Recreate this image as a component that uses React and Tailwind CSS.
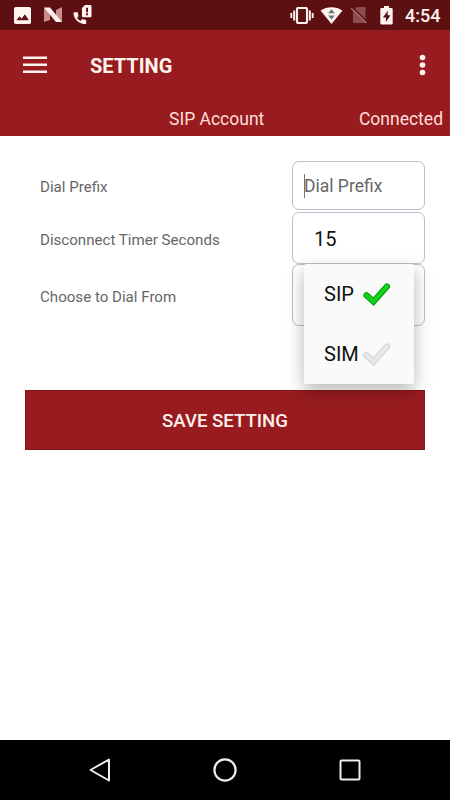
function StatusBar() {
  return (
    <div className="flex h-[30px] items-center bg-[#5c1012] pl-[14px] pr-[10px] text-[#fff3f0]">
      <svg className="h-[17px] w-[17px] shrink-0" viewBox="0 0 17 17">
        <rect width="17" height="17" rx="1.8" fill="currentColor" />
        <path d="M2.5 13.3 5.5 9.2l2 2.5 3.4-4.5 4 6.1z" fill="#5c1012" />
      </svg>
      <svg className="ml-3 h-4 w-5 shrink-0" viewBox="0 0 20 16">
        <path d="M1 1 7 3v10l-6 2zM19 0v15l-6-2V3z" fill="#c98f8f" />
        <path d="M1 0.5h6L19 15h-6z" fill="currentColor" />
      </svg>
      <svg className="ml-[10px] h-5 w-5 shrink-0" viewBox="0 0 20 20">
        <path d="M1.1 7.3h3.3c.4 0 .6.3.6.6 0 1.2.2 2.2.6 3.2l-1.6 2c1.2 1.4 2.1 2.1 3.5 2.8l1.7-1.9c1 .4 2.2.7 3.3.7.4 0 .7.3.7.7v3c0 .5-.3.7-.7.7C6.5 19.1.5 14.2.5 7.9c0-.4.3-.6.6-.6z" fill="currentColor" />
        <path d="M12 0h5.5a1 1 0 0 1 1 1v10.3a1 1 0 0 1-1 1h-7.5a1 1 0 0 1-1-1V3z" fill="currentColor" />
        <path d="M13.1 2.8h1.9v4.4h-1.9zM13.1 8.3h1.9v1.9h-1.9z" fill="#5c1012" />
      </svg>
      <svg className="ml-auto h-[17px] w-6 shrink-0" viewBox="0 0 24 17" fill="none" stroke="currentColor">
        <rect x="7" y="1" width="10" height="15" rx="1" strokeWidth="2.1" />
        <path d="M4.2 3.5v10M19.8 3.5v10" strokeWidth="2" />
        <path d="M1.3 6v5M22.7 6v5" strokeWidth="1.9" />
      </svg>
      <svg className="ml-[6px] h-[17px] w-6 shrink-0" viewBox="0 0 24 17">
        <path d="M0.5 3.5C7-1 16-1 22.5 3.5L11.5 17z" fill="currentColor" />
        <path d="M11.5 2.3 14.8 6.3H8.2zM8.2 8.5h6.6l-3.3 4z" fill="#5e7878" />
      </svg>
      <svg className="ml-[6px] h-[18px] w-[18px] shrink-0" viewBox="0 0 18 18">
        <path d="M7 1h7.5a1 1 0 0 1 1 1v14a1 1 0 0 1-1 1H4a1 1 0 0 1-1-1V5z" fill="#8c4c4f" />
        <path d="M2.5 1.5 17.5 16" stroke="#5c1012" strokeWidth="1.3" />
        <path d="M1 2 16.5 17" stroke="#a26c6e" strokeWidth="1.2" />
      </svg>
      <svg className="ml-3 h-[19px] w-[13px] shrink-0" viewBox="0 0 13 19">
        <path d="M4 0h5v2h2.5a1.2 1.2 0 0 1 1.2 1.2v14a1.2 1.2 0 0 1-1.2 1.2h-10A1.2 1.2 0 0 1 .3 17.2v-14A1.2 1.2 0 0 1 1.5 2H4z" fill="currentColor" />
        <path d="M7.8 4.8 2.9 11.5h3v4.5l4.6-6.8H7.6z" fill="#5c1012" />
      </svg>
      <span className="ml-3 w-[35px] whitespace-nowrap pt-px text-[18px] font-medium leading-[30px]">4:54</span>
    </div>
  );
}

function Header() {
  return (
    <header className="flex h-[106px] flex-col bg-[#981c1f] text-[#fff3ed]">
      <div className="flex h-[70px] items-center px-[23px]">
        <svg className="h-[18px] w-6" viewBox="0 0 24 18" stroke="currentColor" strokeWidth="2.5">
          <path d="M0 1.7h24M0 8.7h24M0 15.7h24" />
        </svg>
        <h1 className="ml-[43px] pt-px text-[20px] font-bold leading-6">SETTING</h1>
        <svg className="ml-auto h-[22px] w-[10px]" viewBox="0 0 10 22" fill="currentColor">
          <circle cx="5.500" cy="3.5" r="2.8" />
          <circle cx="5.500" cy="11" r="2.8" />
          <circle cx="5.500" cy="18.5" r="2.8" />
        </svg>
      </div>
      <div className="flex justify-between pl-[169px] pr-[7px] pt-[7px] text-[17.5px] leading-6 text-[#ffdfd8]">
        <span>SIP Account</span>
        <span>Connected</span>
      </div>
    </header>
  );
}

function Check({ fill, stroke }) {
  return (
    <svg className="h-6 w-7 shrink-0" viewBox="0 0 28 24" fill="none" strokeLinecap="round">
      <path d="M3.5 13.2 10.5 19.5 24 4.500" stroke={stroke} strokeWidth="6.2" />
      <path d="M3.5 13.2 10.5 19.5 24 4.500" stroke={fill} strokeWidth="4" />
    </svg>
  );
}

function Label({ children }) {
  return <span className="pt-[3px] text-[15.1px] leading-5 text-[#666]">{children}</span>;
}

const field = "w-[133px] rounded-[7px] border border-[#bebeca]";

export default function App() {
  return (
    <div className="flex h-[800px] w-[450px] flex-col overflow-hidden bg-white font-['Roboto',sans-serif]">
      <StatusBar />
      <Header />
      <main className="flex-1 px-[25px] pt-[25px]">
        <div className="flex flex-col gap-[2px] pl-[15px]">
          <div className="flex h-[49px] items-center justify-between">
            <Label>Dial Prefix</Label>
            <div className={`${field} flex h-[49px] items-center pl-[11px] text-[17.5px] text-[#666]`}>
              <span className="h-6 w-px bg-[#777]" />
              <span className="-ml-px pt-[2px]">Dial Prefix</span>
            </div>
          </div>
          <div className="flex h-[52px] items-center justify-between">
            <Label>Disconnect Timer Seconds</Label>
            <div className={`${field} flex h-[52px] items-center pl-[21px] pt-[2px] text-[20px] text-[#111]`}>15</div>
          </div>
          <div className="-mt-[2px] flex h-[62px] items-center justify-between">
            <Label>Choose to Dial From</Label>
            <div className={`${field} relative h-[62px]`}>
              <div className="absolute -top-px left-[11px] z-10 flex h-[120px] w-[110px] flex-col rounded-[2px] bg-[#fafafa] pl-5 text-[20px] text-[#111] shadow-[0_8px_16px_rgba(0,0,0,0.2),0_4px_24px_rgba(0,0,0,0.1)]">
                <div className="flex h-[60px] items-center">
                  <span className="w-[39px]">SIP</span>
                  <Check fill="#12d51b" stroke="#079b0c" />
                </div>
                <div className="flex h-[60px] items-center">
                  <span className="w-[39px]">SIM</span>
                  <Check fill="#e9e9e9" stroke="#d2d2d2" />
                </div>
              </div>
            </div>
          </div>
        </div>
        <button className="mt-16 block h-[60px] w-full border border-[#861317] bg-[#981c1f] pt-[3px] text-[18.6px] font-medium text-[#fff0eb]">
          SAVE SETTING
        </button>
      </main>
      <nav className="flex h-[60px] items-center bg-black px-[37px] text-[#eee]">
        <div className="flex flex-1 justify-center">
          <svg className="h-6 w-6" viewBox="0 0 24 24" fill="none" stroke="currentColor" strokeWidth="2">
            <path d="M21 1.5v21L2.5 12z" strokeLinejoin="round" />
          </svg>
        </div>
        <div className="flex flex-1 justify-center">
          <svg className="h-6 w-6" viewBox="0 0 24 24" fill="none" stroke="currentColor" strokeWidth="2.2">
            <circle cx="12" cy="12" r="10.6" />
          </svg>
        </div>
        <div className="flex flex-1 justify-center">
          <svg className="h-6 w-6" viewBox="0 0 24 24" fill="none" stroke="currentColor" strokeWidth="2">
            <rect x="2.5" y="2.5" width="19" height="19" rx="1" />
          </svg>
        </div>
      </nav>
    </div>
  );
}
